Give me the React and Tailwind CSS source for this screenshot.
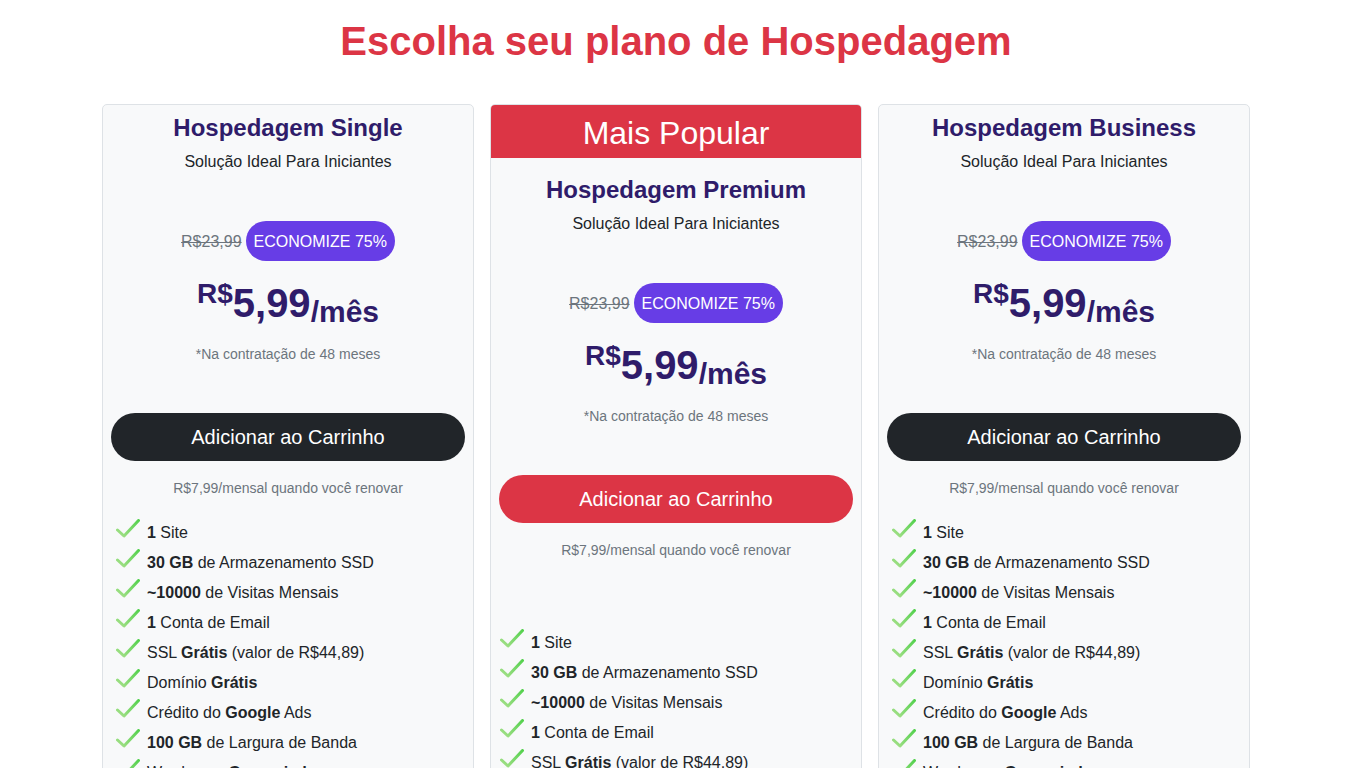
import React from "react";

const features = [
  [<b key="b">1</b>, " Site"],
  [<b key="b">30 GB</b>, " de Armazenamento SSD"],
  [<b key="b">~10000</b>, " de Visitas Mensais"],
  [<b key="b">1</b>, " Conta de Email"],
  ["SSL ", <b key="b">Grátis</b>, " (valor de R$44,89)"],
  ["Domínio ", <b key="b">Grátis</b>],
  ["Crédito do ", <b key="b">Google</b>, " Ads"],
  [<b key="b">100 GB</b>, " de Largura de Banda"],
  ["Wordpress ", <b key="b">Gerenciado</b>],
  [<b key="b">Backups</b>, " Semanais"],
];

function Check() {
  return (
    <svg width="24" height="19" viewBox="0 0 24 19" className="shrink-0 mt-[-10px]">
      <defs>
        <linearGradient id="cg" x1="0" y1="1" x2="1" y2="0">
          <stop offset="0" stopColor="#a6e08a" />
          <stop offset="1" stopColor="#55d14f" />
        </linearGradient>
      </defs>
      <path d="M1.5 11 L8 17 L22.5 1.5" fill="none" stroke="url(#cg)" strokeWidth="3" strokeLinecap="round" strokeLinejoin="round" />
    </svg>
  );
}

function Card({ name, popular }) {
  return (
    <div className="w-[372px] border border-[#dee2e6] rounded-[5px] bg-[#f8f9fa] overflow-hidden flex flex-col text-center pb-4">
      {popular && (
        <div className="bg-[#dc3545] text-white text-[32px] leading-[57px] h-[53px] overflow-hidden mx-[-1px] mt-[-1px] pt-[1px] box-content">
          Mais Popular
        </div>
      )}
      <div className={popular ? "mt-[17px]" : "mt-[8px]"}>
        <div className="text-[24px] leading-[29px] font-bold text-[#2f1c6a]">{name}</div>
        <div className="text-[16px] leading-[24px] text-[#212529] mt-[8px]">Solução Ideal Para Iniciantes</div>
        <div className="mt-[47px] flex justify-center items-center h-[40px] gap-[4px]">
          <span className="text-[16px] text-[#6c757d] line-through relative top-[1px]">R$23,99</span>
          <span className="bg-[#673de6] text-white text-[16px] rounded-full h-[40px] leading-[42px] px-[8px]">ECONOMIZE 75%</span>
        </div>
        <div className="mt-[18px] h-[48px] leading-[48px] font-bold text-[#2f1c6a] whitespace-nowrap">
          <span className="text-[28px] relative top-[-14px]">R$</span>
          <span className="text-[40px]">5,99</span>
          <span className="text-[30px] relative top-[5px]">/mês</span>
        </div>
        <div className="mt-[17px] text-[14px] leading-[20px] text-[#6c757d]">*Na contratação de 48 meses</div>
        <div className="px-2 mt-[49px]">
          <div className={(popular ? "bg-[#dc3545]" : "bg-[#212529]") + " h-[48px] rounded-full text-white text-[20px] leading-[48px]"}>
            Adicionar ao Carrinho
          </div>
        </div>
        <div className="mt-[17px] text-[14px] leading-[20px] text-[#6c757d]">R$7,99/mensal quando você renovar</div>
        <ul className={(popular ? "mt-[68px] pl-[9px]" : "mt-[20px] pl-[13px]") + " text-left text-[16px] text-[#212529]"}>
          {features.map((f, i) => (
            <li key={i} className="flex items-center h-[30px] gap-[7px]">
              <Check />
              <span className="leading-[30px]">{f}</span>
            </li>
          ))}
        </ul>
      </div>
    </div>
  );
}

export default function App() {
  return (
    <div className="w-[1348px] min-h-[768px] bg-white pl-[4px]" style={{ fontFamily: '"Liberation Sans", Arial, sans-serif' }}>
      <h1 className="text-center text-[40px] leading-[48px] font-bold text-[#dc3545] pt-[17px]">
        Escolha seu plano de Hospedagem
      </h1>
      <div className="w-[1148px] mx-auto mt-[39px] flex gap-[16px] items-start">
        <Card name="Hospedagem Single" />
        <Card name="Hospedagem Premium" popular />
        <Card name="Hospedagem Business" />
      </div>
    </div>
  );
}
